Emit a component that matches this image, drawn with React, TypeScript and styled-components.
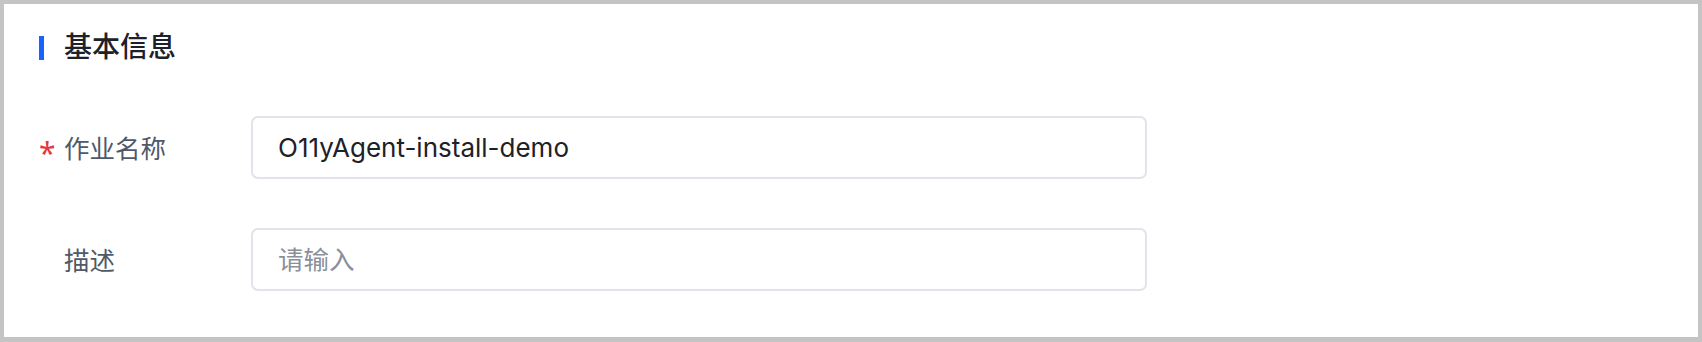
import React from "react";
import styled, { createGlobalStyle } from "styled-components";

const Global = createGlobalStyle`
  html, body { margin: 0; padding: 0; background: #c4c4c4; }
  body { font-family: Inter, "Noto Sans CJK SC", sans-serif; }
  * { box-sizing: border-box; }
`;

const Card = styled.section`
  margin: 4px 4px 5px 4px;
  height: 333px;
  background: #ffffff;
  padding: 32px 0 0 35px;
`;

const TitleRow = styled.div`
  display: flex;
  align-items: center;
  gap: 20px;
  height: 24px;
`;

const TitleBar = styled.span`
  width: 5px;
  height: 24px;
  background: #1664ff;
`;

const Title = styled.h2`
  margin: 0 0 6px 0;
  font-family: "Noto Sans CJK SC", sans-serif;
  font-size: 28px;
  font-weight: 500;
  line-height: 24px;
  color: #1d2129;
`;

const Form = styled.div`
  display: flex;
  flex-direction: column;
  gap: 49px;
  margin-top: 56px;
`;

const Row = styled.div`
  display: flex;
  align-items: center;
`;

const Label = styled.label`
  display: flex;
  align-items: center;
  width: 212px;
  padding-bottom: 2px;
  font-family: "Noto Sans CJK SC", sans-serif;
  font-size: 25.5px;
  color: #4e5969;
`;

const Star = styled.span<{ $show: boolean }>`
  width: 25px;
  color: #e5373f;
  font-family: "Noto Sans", sans-serif;
  font-size: 30px;
  font-weight: 400;
  line-height: 1;
  padding-top: 12px;
  visibility: ${(p) => (p.$show ? "visible" : "hidden")};
`;

const Input = styled.input`
  width: 896px;
  height: 63px;
  border: 2px solid #e1e4ea;
  border-radius: 7px;
  padding: 0 25px;
  font-family: Inter, "Noto Sans CJK SC", sans-serif;
  font-size: 26px;
  color: #1d2129;
  background: #fff;
  outline: none;
  &::placeholder {
    color: #8a8f99;
    font-family: "Noto Sans CJK SC", sans-serif;
    font-size: 25.5px;
  }
`;

export default function App() {
  return (
    <>
      <Global />
      <Card>
        <TitleRow>
          <TitleBar />
          <Title>基本信息</Title>
        </TitleRow>
        <Form>
          <Row>
            <Label>
              <Star $show>*</Star>
              作业名称
            </Label>
            <Input defaultValue="O11yAgent-install-demo" />
          </Row>
          <Row>
            <Label>
              <Star $show={false}>*</Star>
              描述
            </Label>
            <Input placeholder="请输入" />
          </Row>
        </Form>
      </Card>
    </>
  );
}
